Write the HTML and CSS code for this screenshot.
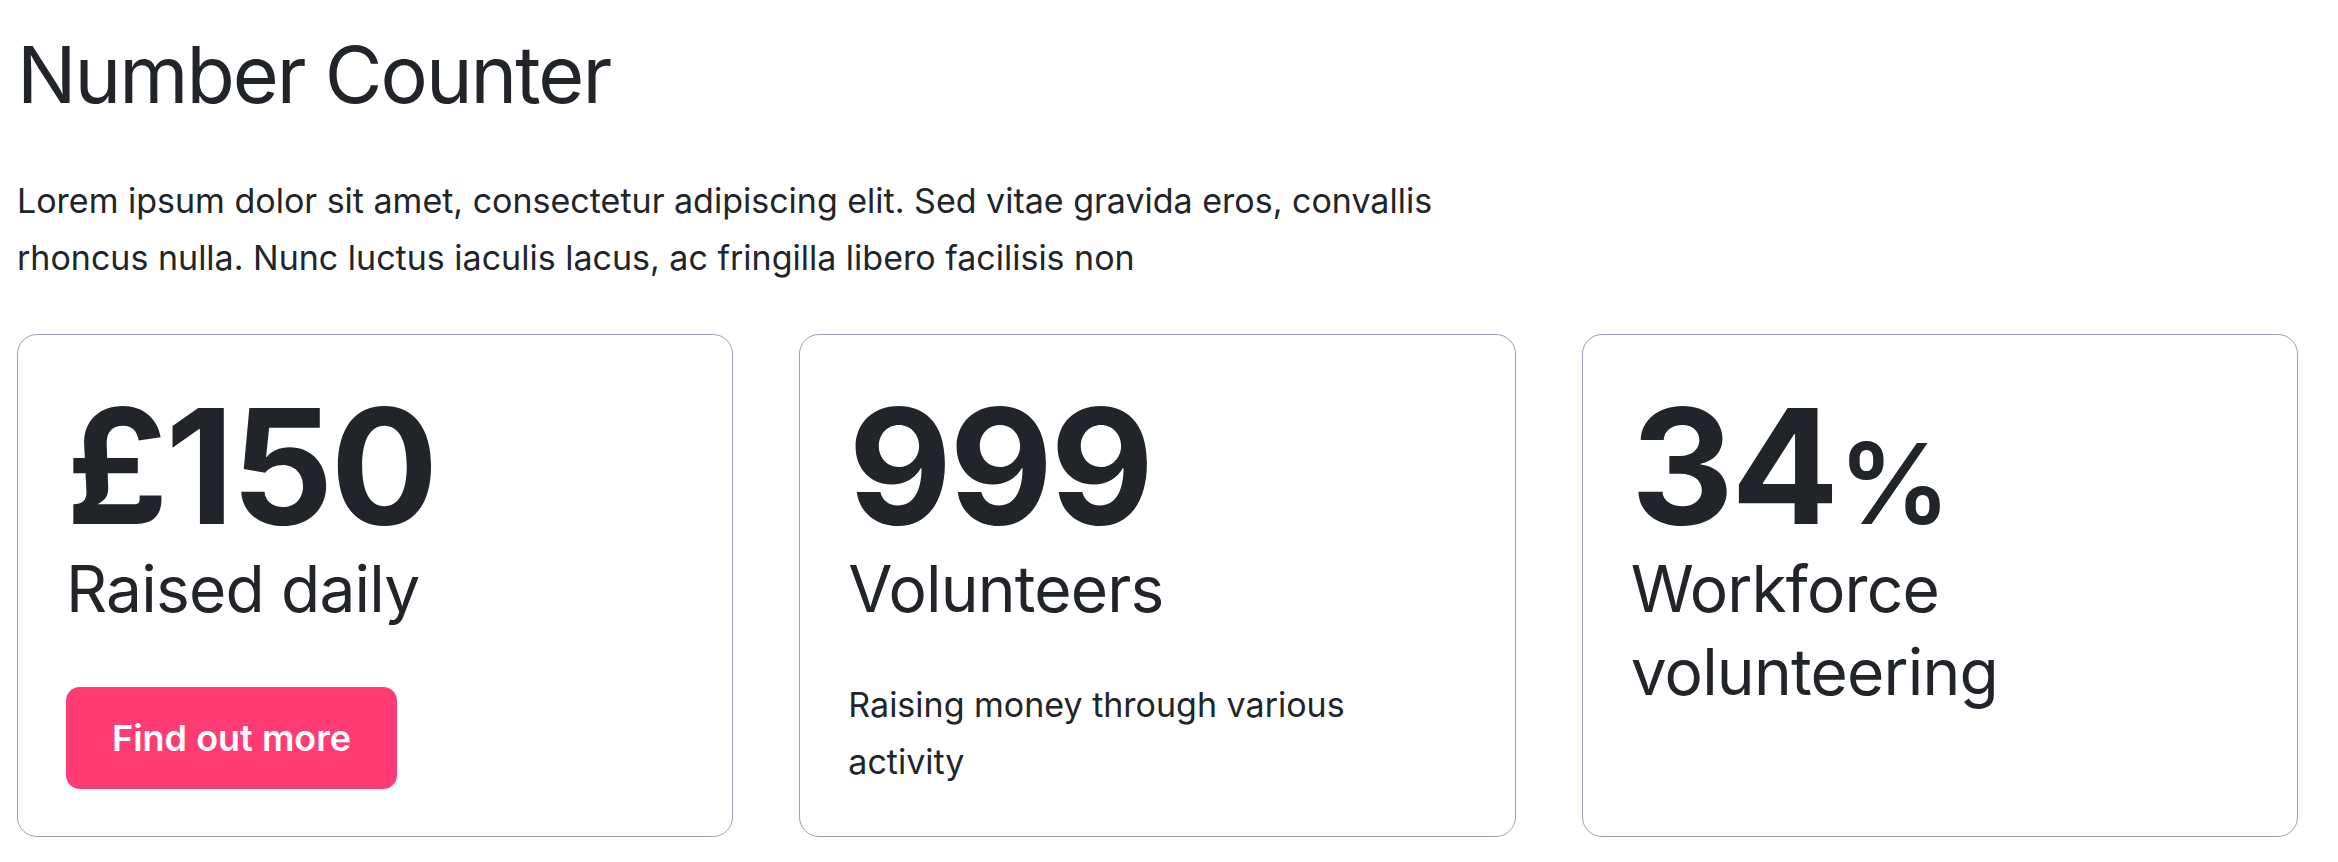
FILE: index.html
```html
<!DOCTYPE html>
<html lang="en">
<head>
<meta charset="utf-8">
<title>Number Counter</title>
<link rel="stylesheet" href="styles.css">
</head>
<body>
<main class="page">
  <h1 class="title">Number Counter</h1>
  <p class="intro">Lorem ipsum dolor sit amet, consectetur adipiscing elit. Sed vitae gravida eros, convallis rhoncus nulla. Nunc luctus iaculis lacus, ac fringilla libero facilisis non</p>
  <div class="stats">
    <div class="stat-card">
      <div class="stat-number">£150</div>
      <h2 class="stat-label">Raised daily</h2>
      <a class="btn" href="#">Find out more</a>
    </div>
    <div class="stat-card">
      <div class="stat-number">999</div>
      <h2 class="stat-label">Volunteers</h2>
      <p class="stat-text">Raising money through various activity</p>
    </div>
    <div class="stat-card">
      <div class="stat-number">34<span class="stat-unit">%</span></div>
      <h2 class="stat-label">Workforce volunteering</h2>
    </div>
  </div>
</main>
</body>
</html>
```
FILE: styles.css
```css
* { box-sizing: border-box; }

html, body {
  margin: 0;
  padding: 0;
  background: #ffffff;
}

body {
  font-family: Inter, "Noto Sans", "Liberation Sans", sans-serif;
  color: #212529;
}

.page {
  padding: 27px 40px 0 17px;
}

.title {
  margin: 0;
  font-size: 79px;
  font-weight: 400;
  line-height: 1.2;
  letter-spacing: -2px;
}

.intro {
  margin: 50px 0 0;
  max-width: 1500px;
  font-size: 34px;
  line-height: 57.6px;
  letter-spacing: 0;
}

.stats {
  margin-top: 47px;
  display: grid;
  grid-template-columns: repeat(3, 1fr);
  gap: 66px;
}

.stat-card {
  border: 1px solid #98a2b0;
  border-radius: 20px;
  padding: 51px 48px 46px;
  display: flex;
  flex-direction: column;
  align-items: flex-start;
}

.stat-number {
  font-size: 160px;
  font-weight: 700;
  line-height: 1;
  letter-spacing: -3px;
}

.stat-unit {
  font-size: 112px;
  font-weight: 600;
  letter-spacing: 0;
  margin-left: 2px;
}

.stat-label {
  margin: 1px 0 0;
  font-size: 64px;
  font-weight: 400;
  line-height: 83px;
  letter-spacing: -0.8px;
}

.btn {
  margin-top: 57px;
  display: inline-block;
  background: #ff3b74;
  color: #ffffff;
  text-decoration: none;
  font-size: 36px;
  font-weight: 600;
  line-height: 54px;
  padding: 24px 46px;
  border-radius: 14px;
}

.stat-text {
  margin: 46px 0 0;
  font-size: 34px;
  line-height: 57px;
  max-width: 560px;
  letter-spacing: 0;
}
```
